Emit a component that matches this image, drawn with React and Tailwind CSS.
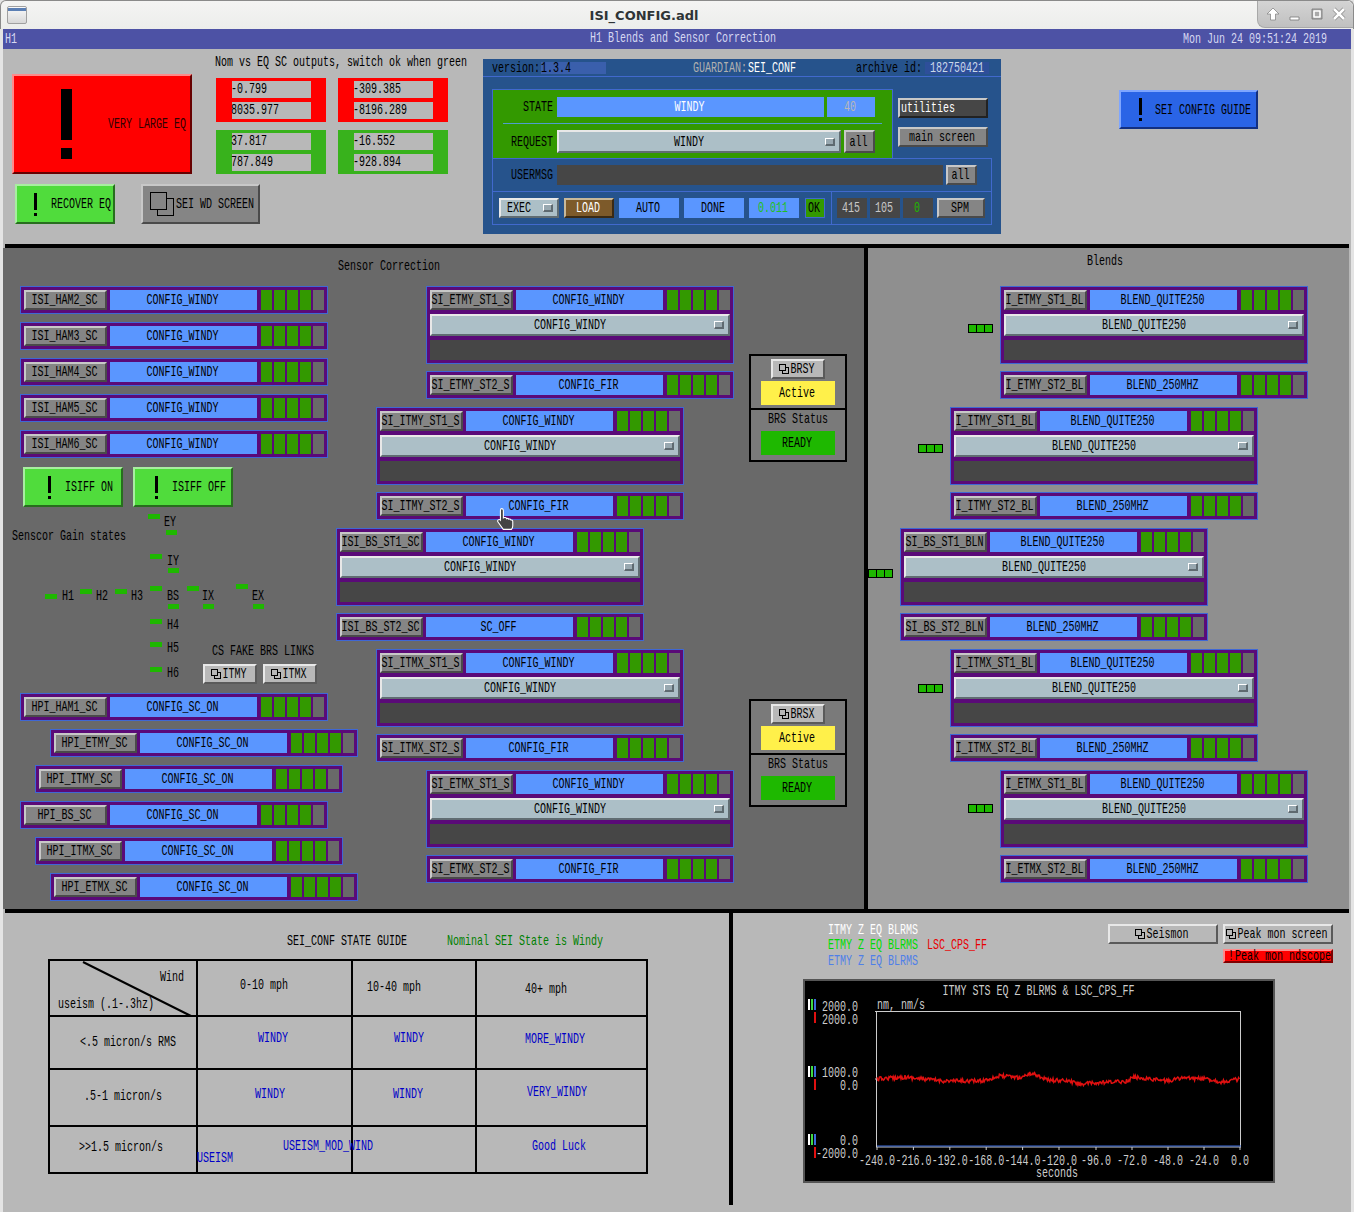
import React from "react";

const T = ({ className = "", children }) => (
  <span className={`block w-fit whitespace-pre leading-[10px] h-[10px] scale-y-150 translate-y-px ${className}`}>{children}</span>
);

const GRAY = "border-2 border-t-[#c8c8c8] border-l-[#c8c8c8] border-r-[#4a4a4a] border-b-[#4a4a4a] bg-[#858585]";
const LIGHT = "border-2 border-t-[#e8e8e8] border-l-[#e8e8e8] border-r-[#5a5a5a] border-b-[#5a5a5a] bg-[#b8b8b8]";
const GREEN = "border-2 border-t-[#a8eea0] border-l-[#a8eea0] border-r-[#286e1e] border-b-[#286e1e] bg-[#50dc3c]";
const MENU = "border-2 border-t-[#e8e8e8] border-l-[#e8e8e8] border-r-[#606c72] border-b-[#606c72] bg-[#acbfc7]";
const CENTER = "flex items-center justify-center shrink-0 pr-[2px]";

const Exclaim = ({ bar = "w-[3px] h-[17px]", dot = "w-[3px] h-[3px] mt-[3px]" }) => (
  <div className="flex flex-col shrink-0">
    <div className={`bg-black ${bar}`} />
    <div className={`bg-black ${dot}`} />
  </div>
);

const Link = () => (
  <svg width="10" height="10" viewBox="0 0 10 10" fill="none" stroke="black" className="shrink-0 mr-px">
    <rect x="3.5" y="3.5" width="6" height="6" />
    <rect x="0.5" y="0.5" width="6" height="6" fill="#b8b8b8" />
  </svg>
);

const Indicator = () => (
  <div className="w-[10px] h-[8px] shrink-0 ml-[6px] mr-[4px] bg-[#98a8b0] border-t border-l border-t-white border-l-white border-b-2 border-r-2 border-b-[#5e6a70] border-r-[#5e6a70]" />
);

const Leds = () => (
  <div className="flex gap-[2px] ml-[4px]">
    {[0, 1, 2, 3].map((i) => (
      <div key={i} className="w-[11px] h-[20px] bg-[#339900]" />
    ))}
    <div className="w-[11px] h-[20px] bg-[#696969]" />
  </div>
);

const Row = ({ name, value }) => (
  <div className="flex w-[300px] h-[20px]">
    <div className={`${CENTER} w-[83px] h-[20px] ${GRAY}`}><T>{name}</T></div>
    <div className={`${CENTER} w-[147px] h-[20px] ml-[3px] bg-[#5a96ff]`}><T>{value}</T></div>
    <Leds />
  </div>
);

const Small = ({ name, value, className = "" }) => (
  <div className={`w-[308px] h-[28px] shrink-0 border border-[#3f67d5] bg-[#5a0a78] p-[3px] ${className}`}>
    <Row name={name} value={value} />
  </div>
);

const Big = ({ name, value, className = "" }) => (
  <div className={`w-[308px] h-[78px] shrink-0 border border-[#3f67d5] bg-[#5a0a78] p-[3px] ${className}`}>
    <Row name={name} value={value} />
    <div className={`flex items-center w-[300px] h-[22px] mt-[4px] ${MENU}`}>
      <div className="flex-1 flex justify-center"><T>{value}</T></div>
      <Indicator />
    </div>
    <div className="w-[300px] h-[20px] mt-[4px] bg-[#464646]" />
  </div>
);

const Triple = ({ className = "" }) => (
  <div className={`flex w-[25px] h-[9px] shrink-0 border border-black bg-black gap-px mr-[7px] ${className}`}>
    <div className="flex-1 bg-[#1eb800]" />
    <div className="flex-1 bg-[#1eb800]" />
    <div className="flex-1 bg-[#1eb800]" />
  </div>
);

const BRS = ({ name, className = "" }) => (
  <div className={`w-[98px] h-[108px] border-2 border-black bg-[#7a7a7a] flex flex-col items-center pt-[3px] ${className}`}>
    <div className={`${CENTER} w-[54px] h-[20px] ${LIGHT}`}><Link /><T>{name}</T></div>
    <div className={`${CENTER} w-[74px] h-[24px] mt-[2px] bg-[#fff04a]`}><T>Active</T></div>
    <div className="w-full h-[2px] mt-[3px] bg-black" />
    <T className="mt-[4px]">BRS Status</T>
    <div className={`${CENTER} w-[74px] h-[24px] mt-[7px] bg-[#1eb800]`}><T>READY</T></div>
  </div>
);

const Readout = ({ color, a, b, className = "" }) => (
  <div className={`w-[110px] h-[44px] pl-[16px] pt-[3px] ${color} ${className}`}>
    <div className="w-[79px] h-[17px] bg-[#b8b8b8] flex items-center"><T className="-mt-[2px] -ml-px">{a}</T></div>
    <div className="w-[79px] h-[17px] mt-[4px] bg-[#b8b8b8] flex items-center"><T className="-mt-[2px] -ml-px">{b}</T></div>
  </div>
);

const Blue = ({ className = "", children }) => (
  <div className={`${CENTER} h-[20px] bg-[#5a96ff] ${className}`}>{children}</div>
);

const Dark = ({ className = "", children }) => (
  <div className={`${CENTER} w-[30px] h-[20px] bg-[#464646] ${className}`}>{children}</div>
);

const Led = ({ className }) => <div className={`absolute h-[5px] bg-[#1eb800] ${className}`} />;
const Lab = ({ className, children }) => <T className={`absolute ${className}`}>{children}</T>;

const TOPS = [
  ["ISI_HAM2_SC", "CONFIG_WINDY"],
  ["ISI_HAM3_SC", "CONFIG_WINDY"],
  ["ISI_HAM4_SC", "CONFIG_WINDY"],
  ["ISI_HAM5_SC", "CONFIG_WINDY"],
  ["ISI_HAM6_SC", "CONFIG_WINDY"],
];

const CENTERS = [
  ["ml-[90px]", "mt-0", "SI_ETMY_ST1_S", "CONFIG_WINDY", "SI_ETMY_ST2_S", "CONFIG_FIR"],
  ["ml-[40px]", "mt-[8px]", "SI_ITMY_ST1_S", "CONFIG_WINDY", "SI_ITMY_ST2_S", "CONFIG_FIR"],
  ["ml-0", "mt-[8px]", "ISI_BS_ST1_SC", "CONFIG_WINDY", "ISI_BS_ST2_SC", "SC_OFF"],
  ["ml-[40px]", "mt-[8px]", "SI_ITMX_ST1_S", "CONFIG_WINDY", "SI_ITMX_ST2_S", "CONFIG_FIR"],
  ["ml-[90px]", "mt-[8px]", "SI_ETMX_ST1_S", "CONFIG_WINDY", "SI_ETMX_ST2_S", "CONFIG_FIR"],
];

const RIGHTS = [
  ["ml-[100px]", "ml-[132px]", "mt-0", "I_ETMY_ST1_BL", "I_ETMY_ST2_BL", "mt-[38px]"],
  ["ml-[50px]", "ml-[82px]", "mt-[8px]", "I_ITMY_ST1_BL", "I_ITMY_ST2_BL", "mt-[37px]"],
  ["ml-0", "ml-[32px]", "mt-[8px]", "SI_BS_ST1_BLN", "SI_BS_ST2_BLN", "mt-[41px]"],
  ["ml-[50px]", "ml-[82px]", "mt-[8px]", "I_ITMX_ST1_BL", "I_ITMX_ST2_BL", "mt-[35px]"],
  ["ml-[100px]", "ml-[132px]", "mt-[8px]", "I_ETMX_ST1_BL", "I_ETMX_ST2_BL", "mt-[34px]"],
];

// red trace: seeded noise over a hand-read envelope
const ENV = [[877,1079],[905,1077],[917,1078.5],[945,1081],[981,1081],[1000,1076],[1020,1077.5],[1032,1073],[1048,1080],[1068,1081],[1080,1084],[1100,1083],[1128,1081],[1133,1077],[1168,1081],[1180,1078],[1208,1079],[1222,1082],[1240,1079]];
const trace = (() => {
  let s = 12345;
  const r = () => { s = (s * 16807) % 2147483647; return s / 2147483647 - 0.5; };
  const pts = [];
  for (let x = 877; x <= 1240; x += 0.8) {
    let i = 0;
    while (i < ENV.length - 2 && ENV[i + 1][0] < x) i++;
    const [x0, y0] = ENV[i], [x1, y1] = ENV[i + 1];
    const y = y0 + ((y1 - y0) * (x - x0)) / (x1 - x0) + r() * 4;
    pts.push(`${x.toFixed(1)},${y.toFixed(1)}`);
  }
  return pts.join(" ");
})();

const SvgT = ({ x, y, anchor = "start", fill = "#cccccc", children }) => (
  <text transform={`translate(${x} ${y + 5}) scale(1 1.5)`} textAnchor={anchor} fontSize="10" fill={fill}>{children}</text>
);

const Chart = () => {
  const ticks = [["-240.0",877],["-216.0",913.4],["-192.0",949.8],["-168.0",986.2],["-144.0",1022.6],["-120.0",1059],["-96.0",1096],["-72.0",1132],["-48.0",1168],["-24.0",1204],["0.0",1240]];
  const bars = [999, 1066, 1134];
  const reds = [1012, 1079, 1147];
  return (
    <svg viewBox="805 981 468 200" width="468" height="200" className="block">
      <SvgT x={1038.5} y={990} anchor="middle">ITMY STS EQ Z BLRMS &amp; LSC_CPS_FF</SvgT>
      <SvgT x={877} y={1004}>nm, nm/s</SvgT>
      <SvgT x={858} y={1006} anchor="end">2000.0</SvgT>
      <SvgT x={858} y={1019} anchor="end">2000.0</SvgT>
      <SvgT x={858} y={1072} anchor="end">1000.0</SvgT>
      <SvgT x={858} y={1085} anchor="end">0.0</SvgT>
      <SvgT x={858} y={1140} anchor="end">0.0</SvgT>
      <SvgT x={858} y={1153} anchor="end">-2000.0</SvgT>
      {bars.map((y) => (
        <g key={y}>
          <rect x="808" y={y} width="2" height="11" fill="#ffffff" />
          <rect x="811" y={y} width="2" height="11" fill="#40d840" />
          <rect x="814" y={y} width="2" height="11" fill="#3c6cdc" />
        </g>
      ))}
      {reds.map((y) => <rect key={y} x="814" y={y} width="2" height="11" fill="#e01010" />)}
      <rect x="876.5" y="1011.5" width="364" height="135.5" fill="none" stroke="#cccccc" />
      <line x1="875" y1="1079" x2="877" y2="1079" stroke="#ccc" />
      <line x1="875" y1="1011.5" x2="877" y2="1011.5" stroke="#ccc" />
      <polyline points={trace} fill="none" stroke="#e01010" strokeWidth="1.5" />
      <line x1="877" y1="1146" x2="1241" y2="1146" stroke="#3c6cdc" strokeWidth="1.2" />
      {ticks.map(([t, x]) => (
        <g key={t}>
          <line x1={x} y1="1147" x2={x} y2="1150" stroke="#ccc" />
          <SvgT x={x} y={1160} anchor="middle">{t}</SvgT>
        </g>
      ))}
      <SvgT x={1057} y={1172} anchor="middle">seconds</SvgT>
    </svg>
  );
};

const WinBtn = ({ children }) => (
  <svg width="16" height="16" viewBox="0 0 16 16" fill="none" strokeLinejoin="round" className="shrink-0">{children}</svg>
);

const Cell = ({ className = "", children }) => (
  <div className={`relative border-r-2 border-b-2 border-black ${className}`}>{children}</div>
);

export default function App() {
  return (
    <div className="relative w-[1354px] h-[1212px] overflow-hidden bg-[#e4e4e4] text-[10px] text-black font-['Liberation_Mono',monospace]">
      {/* window title bar */}
      <div className="flex items-center h-[29px] rounded-t-[6px] border-t border-l border-r border-[#8a8a8a] bg-[linear-gradient(#f4f4f3,#ecedeb)]">
        <div className="w-[20px] h-[18px] ml-[6px] mt-[-1px] rounded-[2px] border border-[#a0a0a0] bg-[linear-gradient(#fafafa,#d8d8d8)] overflow-hidden">
          <div className="h-[3px] mt-[1px] bg-[#5b7fb4]" />
        </div>
        <div className="ml-[562px] w-[110px] flex justify-center font-['DejaVu_Sans',sans-serif] font-bold text-[13px] text-[#2e3436] leading-none">ISI_CONFIG.adl</div>
        <div className="ml-auto flex items-center gap-[6px] w-[96px] h-[27px] mb-px rounded-bl-[8px] rounded-tr-[6px] border-l border-b border-[#a8a8a8] bg-[linear-gradient(#d4d4d4,#c0c0c0)] pl-[7px]">
          <WinBtn><path d="M8 2 L14 8 H10.5 V14 H5.5 V8 H2 Z" fill="#fff" stroke="#888" strokeWidth="0.8" /></WinBtn>
          <WinBtn><rect x="3" y="11" width="9" height="3" fill="#fff" stroke="#777" strokeWidth="0.8" /></WinBtn>
          <WinBtn><rect x="3" y="3" width="10" height="10" fill="#aaa" stroke="#777" strokeWidth="0.8" /><rect x="5" y="5" width="6" height="6" fill="none" stroke="#fff" strokeWidth="1.6" /></WinBtn>
          <WinBtn>
            <path d="M3 3 L13 13 M13 3 L3 13" stroke="#888" strokeWidth="4" />
            <path d="M3 3 L13 13 M13 3 L3 13" stroke="#fff" strokeWidth="2.6" />
          </WinBtn>
        </div>
      </div>

      <div className="w-[1348px] ml-[3px] bg-[#b8b8b8]">
        {/* screen header */}
        <div className="flex items-center h-[20px] bg-[#4d52a5] text-[#d6d8f2]">
          <T className="ml-[2px]">H1</T>
          <T className="ml-[573px] -mt-[3px]">H1 Blends and Sensor Correction</T>
          <T className="ml-[407px]">Mon Jun 24 09:51:24 2019</T>
        </div>

        {/* top panel */}
        <div className="flex h-[195px]">
          <div className="w-[480px] shrink-0 pl-[9px]">
            <div className="flex">
              <div className="flex items-center w-[180px] h-[100px] mt-[25px] shrink-0 border-2 border-t-[#ff8a8a] border-l-[#ff8a8a] border-r-[#660000] border-b-[#660000] bg-[#ff0000]">
                <div className="ml-[47px]"><Exclaim bar="w-[11px] h-[51px]" dot="w-[11px] h-[11px] mt-[8px]" /></div>
                <T className="ml-[36px] text-[#300000]">VERY LARGE EQ</T>
              </div>
              <div className="ml-[24px]">
                <T className="mt-[8px] ml-[-1px]">Nom vs EQ SC outputs, switch ok when green</T>
                <div className="flex mt-[11px]">
                  <Readout color="bg-[#ff0000]" a="-0.799" b="8035.977" />
                  <Readout color="bg-[#ff0000]" a="-309.385" b="-8196.289" className="ml-[12px]" />
                </div>
                <div className="flex mt-[8px]">
                  <Readout color="bg-[#38b21c]" a="37.817" b="787.849" />
                  <Readout color="bg-[#38b21c]" a="-16.552" b="-928.894" className="ml-[12px]" />
                </div>
              </div>
            </div>
            <div className="flex mt-[10px]">
              <div className={`flex items-center w-[100px] h-[40px] ml-[3px] shrink-0 ${GREEN}`}>
                <div className="ml-[17px]"><Exclaim /></div>
                <T className="ml-[14px]">RECOVER EQ</T>
              </div>
              <div className={`flex items-center w-[119px] h-[40px] ml-[26px] shrink-0 ${GRAY}`}>
                <svg width="25" height="25" viewBox="0 0 25 25" fill="none" stroke="black" className="ml-[7px] shrink-0">
                  <rect x="7.5" y="6.5" width="16" height="17" />
                  <rect x="0.5" y="0.5" width="16" height="17" fill="#858585" />
                </svg>
                <T className="ml-[1px]">SEI WD SCREEN</T>
              </div>
            </div>
          </div>

          {/* guardian */}
          <div className="w-[518px] h-[175px] mt-[10px] shrink-0 bg-[#26538c]">
            <div className="flex items-center h-[18px] border-b border-[#4169cd] pl-[9px]">
              <T>version:</T>
              <div className="flex items-center w-[65px] h-[12px] ml-px bg-[#3a5fac]"><T>1.3.4</T></div>
              <T className="ml-[87px] text-[#b0b0b0]">GUARDIAN:</T>
              <T className="ml-px text-white">SEI_CONF</T>
              <T className="ml-[60px]">archive id:</T>
              <div className="flex items-center justify-center w-[64px] h-[12px] ml-[3px] bg-[#2e4f9a] text-[#c8d8e8]"><T>182750421</T></div>
            </div>
            <div className="flex ml-[9px] mt-[12px]">
              <div className="w-[401px] h-[70px] border border-[#4169cd] bg-[#339900] pt-[7px]">
                <div className="flex items-center">
                  <div className="w-[60px] flex justify-end"><T>STATE</T></div>
                  <Blue className="w-[267px] ml-[4px] text-white"><T>WINDY</T></Blue>
                  <Blue className="w-[48px] ml-[3px] text-[#b8b8b8]"><T>40</T></Blue>
                </div>
                <div className="w-[379px] h-px ml-[10px] mt-[6px] bg-[#4f9ecd]" />
                <div className="flex items-center mt-[6px]">
                  <div className="w-[60px] flex justify-end"><T>REQUEST</T></div>
                  <div className={`flex items-center w-[284px] h-[23px] ml-[4px] ${MENU}`}>
                    <div className="flex-1 flex justify-center"><T>WINDY</T></div>
                    <Indicator />
                  </div>
                  <div className={`${CENTER} w-[31px] h-[23px] ml-[3px] ${GRAY}`}><T>all</T></div>
                </div>
              </div>
              <div className="ml-[5px] mt-[9px]">
                <div className="flex items-center w-[90px] h-[20px] border-2 border-t-[#c8c8c8] border-l-[#c8c8c8] border-r-[#222222] border-b-[#222222] bg-[#464646] text-white pl-px"><T>utilities</T></div>
                <div className={`${CENTER} w-[90px] h-[20px] mt-[9px] ${GRAY}`}><T>main screen</T></div>
              </div>
            </div>
            <div className="w-[500px] h-[67px] ml-[9px] -mt-px border border-[#4169cd]">
              <div className="flex items-center h-[33px] border-b border-[#4169cd]">
                <div className="w-[60px] flex justify-end"><T>USERMSG</T></div>
                <div className="w-[386px] h-[20px] ml-[4px] bg-[#464646]" />
                <div className={`${CENTER} w-[31px] h-[20px] ml-[3px] ${GRAY}`}><T>all</T></div>
              </div>
              <div className="flex items-center h-[32px] pl-[6px]">
                <div className={`flex items-center w-[60px] h-[20px] ${MENU}`}>
                  <T className="ml-[6px]">EXEC</T>
                  <div className="ml-auto"><Indicator /></div>
                </div>
                <div className={`${CENTER} w-[50px] h-[20px] ml-[5px] border-2 border-t-[#c8b89a] border-l-[#c8b89a] border-r-[#3a2a14] border-b-[#3a2a14] bg-[#7d5a2a] text-white`}><T>LOAD</T></div>
                <Blue className="w-[60px] ml-[5px]"><T>AUTO</T></Blue>
                <Blue className="w-[60px] ml-[5px]"><T>DONE</T></Blue>
                <Blue className="w-[50px] ml-[5px] text-[#22c022]"><T>0.011</T></Blue>
                <div className={`${CENTER} w-[20px] h-[20px] ml-[6px] border border-[#4169cd] bg-[#339900]`}><T>OK</T></div>
                <div className="w-px h-[32px] ml-[6px] bg-[#4169cd]" />
                <Dark className="ml-[5px] text-[#c8c8c8]"><T>415</T></Dark>
                <Dark className="ml-[3px] text-[#c8c8c8]"><T>105</T></Dark>
                <Dark className="ml-[3px] text-[#1eb800]"><T>0</T></Dark>
                <div className={`${CENTER} w-[48px] h-[20px] ml-[4px] ${GRAY}`}><T>SPM</T></div>
              </div>
            </div>
          </div>

          {/* guide */}
          <div className="flex items-center w-[139px] h-[39px] ml-[118px] mt-[41px] shrink-0 border-2 border-t-[#7fa6ff] border-l-[#7fa6ff] border-r-[#122f80] border-b-[#122f80] bg-[#2a64e6]">
            <div className="ml-[18px]"><Exclaim /></div>
            <T className="ml-[13px]">SEI CONFIG GUIDE</T>
          </div>
        </div>

        <div className="h-[4px] mx-[2px] bg-black" />

        {/* middle */}
        <div className="flex h-[661px]">
          <div className="flex w-[865px] shrink-0 border-r-4 border-black bg-[#696969]">
            {/* left column */}
            <div className="w-[316px] ml-[17px] pt-[38px] shrink-0">
              <div className="flex flex-col gap-[8px]">
                {TOPS.map(([n, v]) => <Small key={n} name={n} value={v} />)}
              </div>
              <div className="flex mt-[9px]">
                <div className={`flex items-center w-[100px] h-[40px] ml-[3px] shrink-0 ${GREEN}`}>
                  <div className="ml-[23px]"><Exclaim /></div>
                  <T className="ml-[14px]">ISIFF ON</T>
                </div>
                <div className={`flex items-center w-[100px] h-[40px] ml-[10px] shrink-0 ${GREEN}`}>
                  <div className="ml-[20px]"><Exclaim /></div>
                  <T className="ml-[14px]">ISIFF OFF</T>
                </div>
              </div>
              <div className="relative h-[186px]">
                <Lab className="left-[-8px] top-[24px]">Senscor Gain states</Lab>
                <Led className="left-[128px] top-[7px] w-[12px]" />
                <Lab className="left-[144px] top-[10px]">EY</Lab>
                <Led className="left-[146px] top-[23px] w-[11px]" />
                <Led className="left-[130px] top-[47px] w-[12px]" />
                <Lab className="left-[147px] top-[49px]">IY</Lab>
                <Led className="left-[148px] top-[61px] w-[11px]" />
                <Led className="left-[25px] top-[87px] w-[12px]" />
                <Lab className="left-[42px] top-[84px]">H1</Lab>
                <Led className="left-[60px] top-[82px] w-[12px]" />
                <Lab className="left-[76px] top-[84px]">H2</Lab>
                <Led className="left-[95px] top-[82px] w-[12px]" />
                <Lab className="left-[111px] top-[84px]">H3</Lab>
                <Led className="left-[130px] top-[79px] w-[12px]" />
                <Lab className="left-[147px] top-[84px]">BS</Lab>
                <Led className="left-[148px] top-[97px] w-[11px]" />
                <Led className="left-[167px] top-[79px] w-[12px]" />
                <Lab className="left-[182px] top-[84px]">IX</Lab>
                <Led className="left-[183px] top-[97px] w-[11px]" />
                <Led className="left-[216px] top-[77px] w-[12px]" />
                <Lab className="left-[232px] top-[84px]">EX</Lab>
                <Led className="left-[233px] top-[97px] w-[11px]" />
                <Led className="left-[130px] top-[112px] w-[12px]" />
                <Lab className="left-[147px] top-[113px]">H4</Lab>
                <Led className="left-[130px] top-[135px] w-[12px]" />
                <Lab className="left-[147px] top-[136px]">H5</Lab>
                <Led className="left-[130px] top-[160px] w-[12px]" />
                <Lab className="left-[147px] top-[161px]">H6</Lab>
                <Lab className="left-[192px] top-[139px]">CS FAKE BRS LINKS</Lab>
                <div className={`absolute left-[183px] top-[157px] w-[54px] h-[20px] ${CENTER} ${LIGHT}`}><Link /><T>ITMY</T></div>
                <div className={`absolute left-[243px] top-[157px] w-[54px] h-[20px] ${CENTER} ${LIGHT}`}><Link /><T>ITMX</T></div>
              </div>
              <div className="flex flex-col gap-[8px]">
                <Small name="HPI_HAM1_SC" value="CONFIG_SC_ON" />
                <Small name="HPI_ETMY_SC" value="CONFIG_SC_ON" className="ml-[30px]" />
                <Small name="HPI_ITMY_SC" value="CONFIG_SC_ON" className="ml-[15px]" />
                <Small name="HPI_BS_SC" value="CONFIG_SC_ON" />
                <Small name="HPI_ITMX_SC" value="CONFIG_SC_ON" className="ml-[15px]" />
                <Small name="HPI_ETMX_SC" value="CONFIG_SC_ON" className="ml-[30px]" />
              </div>
            </div>

            {/* center column */}
            <div className="w-[398px] pt-[13px] shrink-0">
              <T className="ml-[2px]">Sensor Correction</T>
              <div className="mt-[15px]">
                {CENTERS.map(([m, t, a, av, b, bv]) => (
                  <div key={a} className={`${m} ${t}`}>
                    <Big name={a} value={av} />
                    <Small name={b} value={bv} className="mt-[7px]" />
                  </div>
                ))}
              </div>
            </div>

            {/* BRS */}
            <div className="ml-[15px] pt-[106px] shrink-0">
              <BRS name="BRSY" />
              <BRS name="BRSX" className="mt-[237px]" />
            </div>
          </div>

          {/* right pane */}
          <div className="w-[481px] shrink-0 bg-[#8f8f8f] pt-[8px]">
            <T className="ml-[219px]">Blends</T>
            <div className="mt-[20px]">
              {RIGHTS.map(([m, m2, t, a, b, tm]) => (
                <div key={a} className={t}>
                  <div className={`flex ${m}`}>
                    <Triple className={tm} />
                    <Big name={a} value="BLEND_QUITE250" />
                  </div>
                  <Small name={b} value="BLEND_250MHZ" className={`mt-[7px] ${m2}`} />
                </div>
              ))}
            </div>
          </div>
        </div>

        <div className="h-[4px] mx-[2px] bg-black" />

        {/* bottom */}
        <div className="flex h-[299px]">
          <div className="w-[726px] shrink-0 pt-[23px]">
            <div className="flex">
              <T className="ml-[284px]">SEI_CONF STATE GUIDE</T>
              <T className="ml-[40px] text-[#008000]">Nominal SEI State is Windy</T>
            </div>
            <div className="grid grid-cols-[148px_155px_124px_171px] grid-rows-[56px_53px_57px_47px] w-[600px] ml-[45px] mt-[13px] border-t-2 border-l-2 border-black">
              <Cell>
                <svg width="148" height="56" viewBox="0 0 148 56" className="absolute left-0 top-0">
                  <line x1="33" y1="1" x2="141" y2="55" stroke="black" strokeWidth="2" />
                </svg>
                <T className="absolute left-[110px] top-[11px]">Wind</T>
                <T className="absolute left-[8px] top-[38px]">useism (.1-.3hz)</T>
              </Cell>
              <Cell><T className="absolute left-[42px] top-[19px]">0-10 mph</T></Cell>
              <Cell><T className="absolute left-[14px] top-[21px]">10-40 mph</T></Cell>
              <Cell><T className="absolute left-[48px] top-[23px]">40+ mph</T></Cell>

              <Cell><T className="absolute left-[30px] top-[20px]">&lt;.5 micron/s RMS</T></Cell>
              <Cell><T className="absolute left-[60px] top-[16px] text-[#0000c8]">WINDY</T></Cell>
              <Cell><T className="absolute left-[41px] top-[16px] text-[#0000c8]">WINDY</T></Cell>
              <Cell><T className="absolute left-[48px] top-[17px] text-[#0000c8]">MORE_WINDY</T></Cell>

              <Cell><T className="absolute left-[34px] top-[21px]">.5-1 micron/s</T></Cell>
              <Cell><T className="absolute left-[57px] top-[19px] text-[#0000c8]">WINDY</T></Cell>
              <Cell><T className="absolute left-[40px] top-[19px] text-[#0000c8]">WINDY</T></Cell>
              <Cell><T className="absolute left-[50px] top-[17px] text-[#0000c8]">VERY_WINDY</T></Cell>

              <Cell><T className="absolute left-[29px] top-[15px]">&gt;&gt;1.5 micron/s</T></Cell>
              <Cell>
                <T className="absolute left-[85px] top-[14px] text-[#0000c8]">USEISM_MOD_WIND</T>
                <T className="absolute left-[-1px] top-[26px] text-[#0000c8]">USEISM</T>
              </Cell>
              <Cell />
              <Cell><T className="absolute left-[55px] top-[14px] text-[#0000c8]">Good Luck</T></Cell>
            </div>
          </div>
          <div className="w-[4px] h-[292px] shrink-0 bg-black" />
          <div className="w-[618px] shrink-0">
            <div className="flex h-[66px]">
              <div className="w-[280px] ml-[95px] pt-[12px] shrink-0">
                <T className="text-white">ITMY Z EQ BLRMS</T>
                <div className="flex mt-[5px]">
                  <T className="text-[#00dc00]">ETMY Z EQ BLRMS</T>
                  <T className="ml-[9px] text-[#e80000]">LSC_CPS_FF</T>
                </div>
                <T className="mt-[6px] text-[#4f7fe8]">ETMY Z EQ BLRMS</T>
              </div>
              <div className="flex mt-[11px] gap-[5px] h-[20px]">
                <div className={`${CENTER} w-[110px] h-[20px] ${LIGHT}`}><Link /><T>Seismon</T></div>
                <div className="flex flex-col gap-[5px]">
                  <div className={`${CENTER} w-[110px] h-[20px] ${LIGHT}`}><Link /><T>Peak mon screen</T></div>
                  <div className="flex items-center w-[110px] h-[20px] border-2 border-t-[#ff8a8a] border-l-[#ff8a8a] border-r-[#800000] border-b-[#800000] bg-[#ff0000]">
                    <T className="ml-[3px]">!</T>
                    <T className="ml-px">Peak mon ndscope</T>
                  </div>
                </div>
              </div>
            </div>
            <div className="w-[472px] h-[204px] ml-[70px] border-2 border-[#555555] bg-black">
              <Chart />
            </div>
          </div>
        </div>
      </div>

      {/* pointer over the screen */}
      <svg width="20" height="24" viewBox="0 0 18 22" className="absolute left-[496px] top-[507px]">
        <path d="M5 1.5c1 0 1.6.8 1.6 1.8V10l1-.3c.8-.2 1.5 0 1.8.6l.2.4c.8-.4 1.6-.2 2 .5.8-.3 1.6 0 1.9.7.9-.2 1.7.4 1.7 1.4v4c0 1.6-.6 2.6-1.2 3.2H6.5L1.8 14c-.6-.8-.5-1.7.1-2.2.7-.5 1.4-.3 2 .3V3.3c0-1 .5-1.8 1.1-1.8z" fill="#444" stroke="#fff" strokeWidth="1" />
      </svg>
    </div>
  );
}
